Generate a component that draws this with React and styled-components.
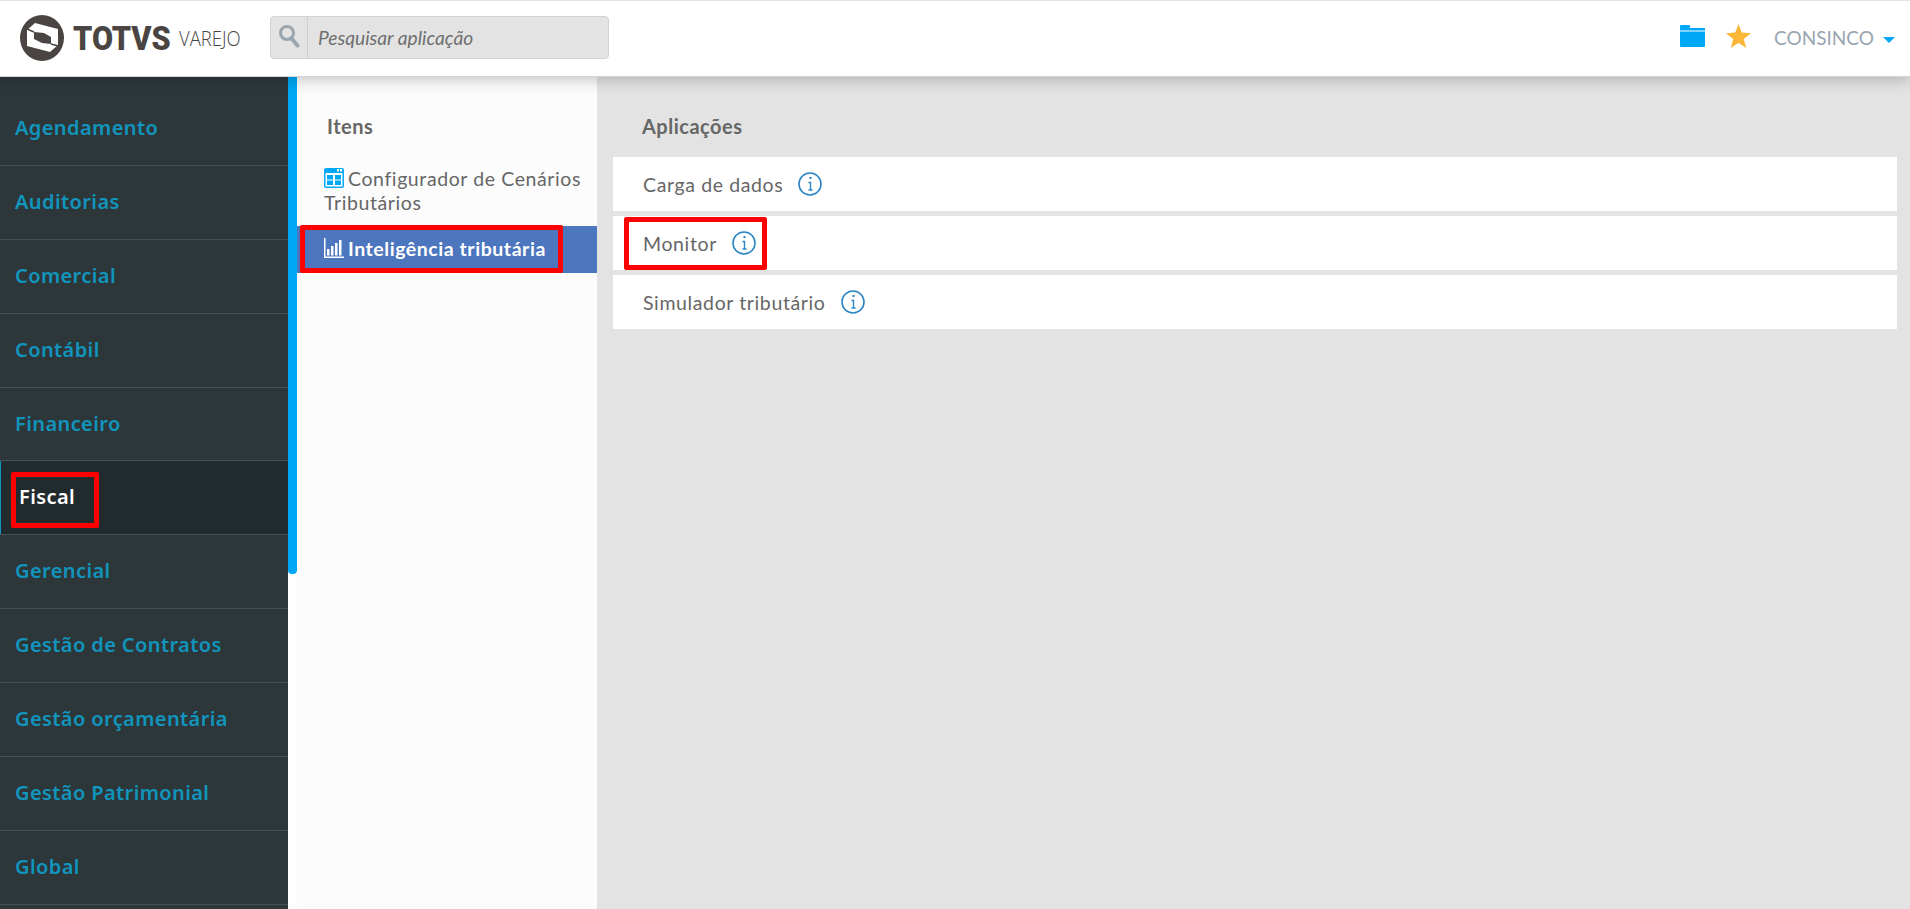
import React from "react";
import styled, { createGlobalStyle } from "styled-components";

const GlobalStyle = createGlobalStyle`
    html, body {
        margin: 0;
        padding: 0;
        height: 100%;
        overflow: hidden;
        background: #e3e3e3;
        font-family: "Lato", "Liberation Sans", sans-serif;
    }
`;

const MODULES = [
    "Agendamento",
    "Auditorias",
    "Comercial",
    "Contábil",
    "Financeiro",
    "Fiscal",
    "Gerencial",
    "Gestão de Contratos",
    "Gestão orçamentária",
    "Gestão Patrimonial",
    "Global",
];

const APPS = [
    { name: "Carga de dados" },
    { name: "Monitor", marked: true },
    { name: "Simulador tributário" },
];

function LogoMark() {
    return (
        <svg width="44" height="46" viewBox="0 0 44 46">
            <ellipse cx="22" cy="23" rx="22" ry="23" fill="#4a4542" />
            <g transform="translate(-5 -6)">
                <path d="M12 21 L20 14 L43 20 L43 36 L35 43 L12 37 Z" fill="#fff" />
                <path d="M19 23 L29 24 L36 28 L36 35 L27 34 L19 30 Z" fill="#4a4542" />
                <path d="M12 20 L19 23 M43.5 37 L36 35" stroke="#4a4542" strokeWidth="1.5" />
            </g>
        </svg>
    );
}

function SearchIcon() {
    return (
        <svg width="22" height="24" viewBox="0 0 22 24" fill="none" stroke="#9aa5ad" strokeWidth="3">
            <circle cx="9" cy="9" r="6.5" />
            <path d="M13.5 14.5 L19.5 21.5" strokeWidth="4" strokeLinecap="round" />
        </svg>
    );
}

function FolderIcon() {
    return (
        <FolderSvg width="25" height="22" viewBox="0 0 25 22" fill="#00a8f5">
            <path d="M0 1 Q0 0 1 0 L9 0 Q10 0 10 1 L10 3 L25 3 L25 5.5 L0 5.5 Z" />
            <path d="M0 6.5 L25 6.5 L25 21 Q25 22 24 22 L1 22 Q0 22 0 21 Z" />
        </FolderSvg>
    );
}

function StarIcon() {
    return (
        <svg width="25" height="24" viewBox="0 0 25 24" fill="#fbb838">
            <path d="M12.5 0 L15.8 8.6 L25 9.2 L17.8 14.9 L20.2 24 L12.5 18.9 L4.8 24 L7.2 14.9 L0 9.2 L9.2 8.6 Z" />
        </svg>
    );
}

function TableIcon() {
    return (
        <IconSvg width="20" height="20" viewBox="0 0 20 20">
            <rect width="20" height="20" rx="2" fill="#00a8f5" />
            <rect x="1.5" y="5" width="17" height="13.5" fill="#fff" />
            <rect x="13" y="1" width="2" height="2.5" fill="#fff" />
            <rect x="16" y="1" width="2" height="2.5" fill="#fff" />
            <rect x="3" y="7" width="6" height="4.5" fill="#00a8f5" />
            <rect x="11" y="7" width="6" height="4.5" fill="#00a8f5" />
            <rect x="3" y="12.5" width="6" height="4.5" fill="#00a8f5" />
            <rect x="11" y="12.5" width="6" height="4.5" fill="#00a8f5" />
        </IconSvg>
    );
}

function ChartIcon() {
    return (
        <IconSvg width="20" height="20" viewBox="0 0 20 20" fill="#fff">
            <rect x="0" y="0" width="1.5" height="20" />
            <rect x="0" y="18.5" width="20" height="1.5" />
            <rect x="3" y="11" width="2.5" height="6.5" />
            <rect x="7" y="8" width="2.5" height="9.5" />
            <rect x="11" y="5" width="2.5" height="12.5" />
            <rect x="15" y="2" width="2.5" height="15.5" />
        </IconSvg>
    );
}

function InfoIcon() {
    return (
        <svg width="24" height="24" viewBox="0 0 24 24" fill="none" stroke="#2a85c5">
            <circle cx="12" cy="12" r="11" strokeWidth="1.6" />
            <path d="M10.5 10.5 L12.5 10.5 L12.5 18 M10.5 18 L14.5 18" strokeWidth="1.4" />
            <path d="M11.5 6 L13.5 6" strokeWidth="2" />
        </svg>
    );
}

function App() {
    return (
        <Page>
            <GlobalStyle />
            <Header>
                <Brand>
                    <LogoMark />
                    <BrandName>TOTVS</BrandName>
                    <BrandProduct>VAREJO</BrandProduct>
                </Brand>
                <Search>
                    <SearchAddon><SearchIcon /></SearchAddon>
                    <SearchInput>Pesquisar aplicação</SearchInput>
                </Search>
                <HeaderActions>
                    <FolderIcon />
                    <StarIcon />
                    <UserName>CONSINCO</UserName>
                    <Caret />
                </HeaderActions>
            </Header>
            <Body>
                <Sidebar>
                    {MODULES.map((name) => (
                        <ModuleRow key={name} $active={name === "Fiscal"}>
                            {name}
                            {name === "Fiscal" && <Highlight $left={11} $top={11} $width={88} $height={56} />}
                        </ModuleRow>
                    ))}
                </Sidebar>
                <ScrollTrack><ScrollThumb /></ScrollTrack>
                <ItemsPanel>
                    <ItemsTitle>Itens</ItemsTitle>
                    <ItemRow>
                        <ItemIcon><TableIcon /></ItemIcon>Configurador de Cenários Tributários
                    </ItemRow>
                    <ItemRow $active>
                        <ItemIcon><ChartIcon /></ItemIcon>Inteligência tributária
                        <Highlight $left={3} $top={-1} $width={263} $height={48} />
                    </ItemRow>
                </ItemsPanel>
                <AppsPanel>
                    <AppsTitle>Aplicações</AppsTitle>
                    <AppList>
                        {APPS.map((app) => (
                            <AppRow key={app.name}>
                                {app.name}
                                <InfoIcon />
                                {app.marked && <Highlight $left={11} $top={1} $width={143} $height={53} />}
                            </AppRow>
                        ))}
                    </AppList>
                </AppsPanel>
            </Body>
        </Page>
    );
}

const Page = styled.div`
    display: flex;
    flex-direction: column;
    width: 100%;
    height: 100vh;
    overflow: hidden;
`;

const Header = styled.header`
    position: relative;
    z-index: 2;
    flex: 0 0 77px;
    box-sizing: border-box;
    display: flex;
    align-items: center;
    padding: 0 15px 2px 20px;
    background: #fff;
    border-top: 1px solid #e3e3e3;
    border-bottom: 1px solid #d5d5d5;
    box-shadow: 0 3px 14px rgba(0, 0, 0, 0.22);
`;

const Brand = styled.div`
    display: flex;
    align-items: center;
    width: 250px;
`;

const BrandName = styled.span`
    margin-left: 9px;
    margin-right: -10px;
    font-family: "Roboto", sans-serif;
    font-weight: 900;
    font-size: 34px;
    color: #4a4542;
    transform: scaleX(0.9);
    transform-origin: left center;
`;

const BrandProduct = styled.span`
    margin-left: 7px;
    font-family: "Open Sans", sans-serif;
    font-weight: 300;
    font-size: 21px;
    color: #4a4542;
    transform: scaleX(0.88);
    transform-origin: left center;
`;

const Search = styled.div`
    display: flex;
    width: 339px;
    height: 43px;
    box-sizing: border-box;
    background: #e3e3e3;
    border: 1px solid #d3d3d3;
    border-radius: 4px;
`;

const SearchAddon = styled.div`
    flex: 0 0 37px;
    display: flex;
    align-items: center;
    justify-content: center;
    padding-bottom: 3px;
    box-sizing: border-box;
    border-right: 1px solid #d0d0d0;
`;

const SearchInput = styled.div`
    display: flex;
    align-items: center;
    padding-left: 10px;
    font-style: italic;
    font-size: 19.2px;
    color: #6f6f6f;
`;

const HeaderActions = styled.div`
    display: flex;
    align-items: center;
    gap: 23px;
    box-sizing: border-box;
    margin-left: auto;
    height: 100%;
    padding-bottom: 3px;
`;

const FolderSvg = styled.svg`
    margin-right: -2px;
`;

const UserName = styled.span`
    margin-top: 3px;
    font-size: 19px;
    color: #9aa5b1;
`;

const Caret = styled.span`
    margin-left: -14px;
    margin-top: 7px;
    border-left: 6px solid transparent;
    border-right: 6px solid transparent;
    border-top: 6px solid #00a8f5;
`;

const Body = styled.div`
    flex: 1;
    display: flex;
    min-height: 0;
`;

const Sidebar = styled.nav`
    flex: 0 0 288px;
    box-sizing: border-box;
    padding-top: 15px;
    background: #2d373a;
    overflow: hidden;
`;

const ModuleRow = styled.div`
    position: relative;
    box-sizing: border-box;
    height: 73.9px;
    display: flex;
    align-items: center;
    padding-left: ${(props) => (props.$active ? "19px" : "15px")};
    padding-bottom: 2px;
    border-bottom: 1px solid #445053;
    font-family: "Noto Sans", sans-serif;
    font-weight: 600;
    font-size: 20px;
    letter-spacing: 0.4px;
    color: ${(props) => (props.$active ? "#fff" : "#1195bd")};
    background: ${(props) => (props.$active ? "#212a2c" : "transparent")};
    box-shadow: ${(props) => (props.$active ? "inset 1px 0 0 #1195bd" : "none")};
`;

const ScrollTrack = styled.div`
    flex: 0 0 9px;
    background: #fff;
`;

const ScrollThumb = styled.div`
    height: 497px;
    background: #00a8f5;
    border-radius: 0 0 4px 4px;
`;

const ItemsPanel = styled.section`
    flex: 0 0 300px;
    background: #fcfcfc;
`;

const ItemsTitle = styled.h2`
    margin: 0;
    padding: 37px 0 0 30px;
    height: 89px;
    box-sizing: border-box;
    font-weight: 700;
    font-size: 20px;
    line-height: 24px;
    letter-spacing: 0.5px;
    color: #666;
`;

const ItemRow = styled.div`
    position: relative;
    box-sizing: border-box;
    padding: ${(props) => (props.$active ? "11px 27px 0" : "1px 14px 0 27px")};
    height: ${(props) => (props.$active ? "47px" : "60px")};
    font-size: 19.5px;
    font-weight: ${(props) => (props.$active ? 700 : 400)};
    line-height: 24px;
    letter-spacing: ${(props) => (props.$active ? "0.55px" : "0.6px")};
    color: ${(props) => (props.$active ? "#fff" : "#666")};
    background: ${(props) => (props.$active ? "#4c76bd" : "transparent")};
`;

const ItemIcon = styled.span`
    display: inline-block;
    height: 16px;
    margin-right: 4px;
    vertical-align: -2px;
`;

const IconSvg = styled.svg`
    display: block;
    margin-top: -4px;
`;

const AppsPanel = styled.main`
    flex: 1;
    padding: 0 13px 0 16px;
    min-width: 0;
`;

const AppsTitle = styled.h2`
    margin: 0;
    padding: 37px 0 0 29px;
    height: 80px;
    box-sizing: border-box;
    font-weight: 700;
    font-size: 20px;
    line-height: 24px;
    letter-spacing: 0.5px;
    color: #666;
`;

const AppList = styled.div`
    display: flex;
    flex-direction: column;
    gap: 5px;
`;

const AppRow = styled.div`
    position: relative;
    display: flex;
    align-items: center;
    gap: 15px;
    height: 54px;
    padding-left: 30px;
    background: #fff;
    font-size: 19.5px;
    letter-spacing: 0.62px;
    color: #666;
`;

// anotação vermelha por cima da tela
const Highlight = styled.span`
    position: absolute;
    box-sizing: border-box;
    left: ${(props) => props.$left}px;
    top: ${(props) => props.$top}px;
    width: ${(props) => props.$width}px;
    height: ${(props) => props.$height}px;
    border: 5px solid #ff0000;
    border-radius: 2px;
`;

export default App;
